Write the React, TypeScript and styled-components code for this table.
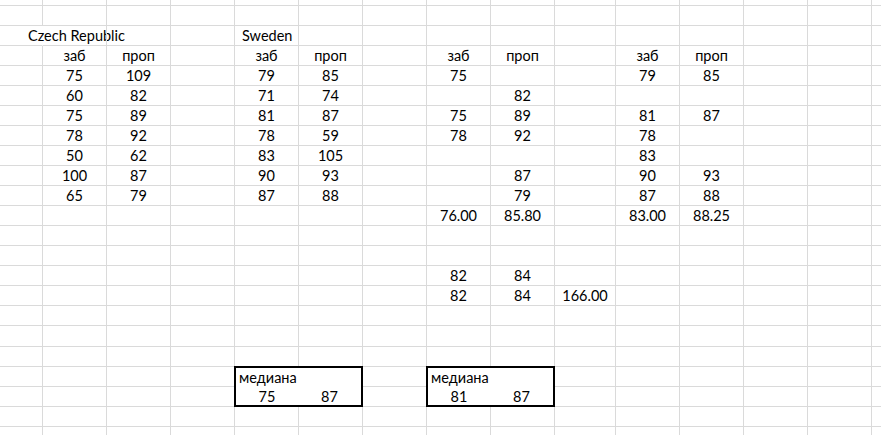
import React from 'react';
import styled, { createGlobalStyle } from 'styled-components';

const GlobalStyle = createGlobalStyle`
  html, body {
    margin: 0;
    padding: 0;
    background: #fff;
  }
  body {
    font-family: Lato, Calibri, 'Liberation Sans', sans-serif;
    color: #000;
  }
`;

// column widths include the 1px grid line on the right
const COLS = [43, 64, 64, 64, 64, 64, 64, 64, 64, 61, 64, 64, 64, 64, 64];
const ROW_COUNT = 23;
const LINE = '#dadada';

type CellData = { v: string; left?: boolean; pad?: number; spill?: boolean };

const data: Record<string, CellData> = {};
const put = (r: number, c: number, v: string, opts: Partial<CellData> = {}) => {
  data[`${r},${c}`] = { v, ...opts };
};

put(2, 0, 'Czech Republic', { left: true, pad: 28, spill: true });
put(2, 4, 'Sweden', { left: true, pad: 7 });
[1, 4, 7, 10].forEach((c) => {
  put(3, c, 'заб');
  put(3, c + 1, 'проп');
});

const czech = [['75', '109'], ['60', '82'], ['75', '89'], ['78', '92'], ['50', '62'], ['100', '87'], ['65', '79']];
const sweden = [['79', '85'], ['71', '74'], ['81', '87'], ['78', '59'], ['83', '105'], ['90', '93'], ['87', '88']];
const left = [['75', ''], ['', '82'], ['75', '89'], ['78', '92'], ['', ''], ['', '87'], ['', '79']];
const right = [['79', '85'], ['', ''], ['81', '87'], ['78', ''], ['83', ''], ['90', '93'], ['87', '88']];

const fill = (rows: string[][], col: number) =>
  rows.forEach(([a, b], i) => {
    if (a) put(4 + i, col, a);
    if (b) put(4 + i, col + 1, b);
  });
fill(czech, 1);
fill(sweden, 4);
fill(left, 7);
fill(right, 10);

put(11, 7, '76.00');
put(11, 8, '85.80');
put(11, 10, '83.00');
put(11, 11, '88.25');
put(14, 7, '82');
put(14, 8, '84');
put(15, 7, '82');
put(15, 8, '84');
put(15, 9, '166.00');

const medians = [
  { col: 4, a: '75', b: '87' },
  { col: 7, a: '81', b: '87' },
];
const MEDIAN_ROW = 19;

function App() {
  const cells: React.ReactNode[] = [];
  for (let r = 0; r < ROW_COUNT; r++) {
    for (let c = 0; c < COLS.length; c++) {
      const m = medians.find((x) => r >= MEDIAN_ROW && r <= MEDIAN_ROW + 1 && c >= x.col && c <= x.col + 1);
      if (m) {
        if (r === MEDIAN_ROW && c === m.col) {
          cells.push(
            <MedianBox key={`${r},${c}`}>
              <MedianLabel>медиана</MedianLabel>
              <MedianValue>{m.a}</MedianValue>
              <MedianValue>{m.b}</MedianValue>
            </MedianBox>
          );
        }
        continue;
      }
      const d = data[`${r},${c}`];
      cells.push(
        <Cell key={`${r},${c}`} $left={d?.left} $pad={d?.pad} $spill={d?.spill}>
          {d?.v}
        </Cell>
      );
    }
  }

  return (
    <>
      <GlobalStyle />
      <Sheet>
        <Grid>{cells}</Grid>
      </Sheet>
    </>
  );
}

const Sheet = styled.div`
  width: 881px;
  height: 435px;
  overflow: hidden;
  background: #fff;
`;

const Grid = styled.div`
  display: grid;
  grid-template-columns: ${COLS.map((w) => `${w}px`).join(' ')};
  grid-template-rows: 6px repeat(16, 20px) 21px repeat(${ROW_COUNT - 18}, 20px);
`;

const Cell = styled.div<{ $left?: boolean; $pad?: number; $spill?: boolean }>`
  box-sizing: border-box;
  border-right: 1px solid ${(p) => (p.$spill ? 'transparent' : LINE)};
  border-bottom: 1px solid ${LINE};
  padding-left: ${(p) => p.$pad ?? 0}px;
  padding-top: 1px;
  font-size: 14.5px;
  line-height: 18px;
  text-align: ${(p) => (p.$left ? 'left' : 'center')};
  white-space: nowrap;
  overflow: visible;
`;

const MedianBox = styled.div`
  grid-column: span 2;
  grid-row: span 2;
  box-sizing: border-box;
  margin: -1px 0 0 -1px;
  border: 2px solid #000;
  background: #fff;
  display: grid;
  grid-template-columns: 62px 1fr;
  grid-template-rows: 19px 1fr;
  position: relative;
  z-index: 1;
`;

const MedianLabel = styled.div`
  grid-column: span 2;
  padding-left: 3px;
  font-size: 14.5px;
  line-height: 19px;
`;

const MedianValue = styled.div`
  text-align: center;
  font-size: 14.5px;
  line-height: 19px;
`;

export default App;
